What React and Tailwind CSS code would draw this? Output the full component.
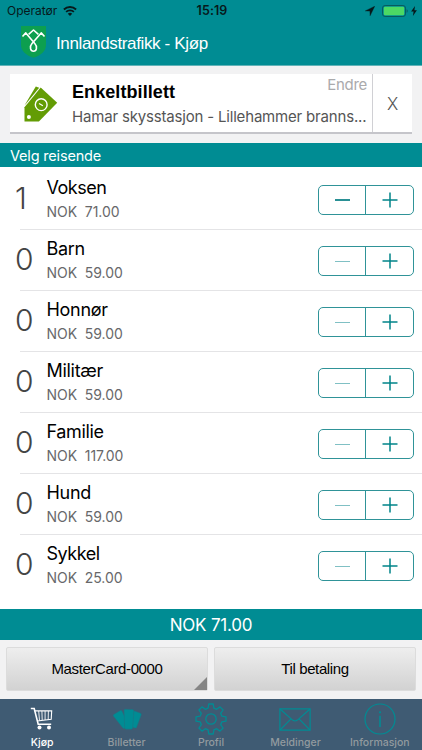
import { useState } from "react";

const initialTravellers = [
  { id: "voksen", name: "Voksen", price: "71.00", count: 1, nameSpacing: "tracking-[-0.500px]" },
  { id: "barn", name: "Barn", price: "59.00", count: 0, nameSpacing: "tracking-[-0.3px]" },
  { id: "honnor", name: "Honnør", price: "59.00", count: 0, nameSpacing: "tracking-[-0.3px]" },
  { id: "militaer", name: "Militær", price: "59.00", count: 0, nameSpacing: "tracking-[-0.3px]" },
  { id: "familie", name: "Familie", price: "117.00", count: 0, nameSpacing: "tracking-[-0.350px]" },
  { id: "hund", name: "Hund", price: "59.00", count: 0, nameSpacing: "tracking-[-0.3px]" },
  { id: "sykkel", name: "Sykkel", price: "25.00", count: 0, nameSpacing: "tracking-[-0.450px]" },
];

const WifiIcon = () => (
  <svg className="w-[14px] h-[10px]" viewBox="0 0 14 10" fill="none" stroke="#07191b">
    <path d="M0.9 3.5a8.8 8.8 0 0 1 12.2 0" strokeWidth="1.9" />
    <path d="M3.1 5.9a5.6 5.6 0 0 1 7.8 0" strokeWidth="1.8" />
    <path d="M7 9.9 4.8 7.7a3.2 3.2 0 0 1 4.4 0z" fill="#07191b" stroke="none" />
  </svg>
);

const LocationIcon = () => (
  <svg className="w-[10px] h-[10px]" viewBox="0 0 10 10" fill="#07191b">
    <path d="M9.7 0.3 0.3 4.9l4.6 0.2 0.2 4.6z" stroke="#07191b" strokeWidth="0.4" strokeLinejoin="round" />
  </svg>
);

const BatteryIcon = () => (
  <svg className="w-[26px] h-[12px]" viewBox="0 0 26 12" fill="none">
    <rect x="0.5" y="0.5" width="23" height="11" rx="2.6" stroke="#075a5f" />
    <rect x="1.8" y="1.8" width="20.4" height="8.4" rx="1.3" fill="#4cd964" />
    <path d="M24.6 4.2v3.6c0.7-0.3 1.1-1 1.1-1.8s-0.4-1.5-1.1-1.8z" fill="#075a5f" />
  </svg>
);

const BoltIcon = () => (
  <svg className="w-[6px] h-[10px]" viewBox="0 0 6 10" fill="#07191b">
    <path d="M4 0 0.1 5.6h2.5L1.9 10 5.9 4.2H3.4z" />
  </svg>
);

const ShieldLogo = () => (
  <svg className="w-[25px] h-[32px]" viewBox="0 0 25 32" fill="none">
    <path d="M0 0h25v18.500C25 24.900 20.600 29.100 12.500 31.700 4.400 29.100 0 24.900 0 18.500z" fill="#0d9f4f" />
    <path
      d="M1.500 10.500 4.800 6.900 13.600 17.300M23.500 10.500 20.200 6.900 11 17.600C8.200 20.800 9.400 25.200 12.500 25.200s4.300-4.400 1.100-7.900M7.600 8.400l4.900-4.400 4.900 4.400"
      stroke="#fff"
      strokeWidth="1.6"
      strokeLinejoin="round"
    />
  </svg>
);

const TicketTagIcon = () => (
  <svg className="w-[34px] h-[36px]" viewBox="0 0 34 36">
    <path d="M11.800 0.600 15.200 1.800 2.600 17 0.600 19.200z" fill="#639c04" />
    <path d="M16.700 1.600 33.200 16.700 14.900 35.600H0.500V21.200z" fill="#639c04" />
    <circle cx="17.200" cy="18.700" r="5.900" fill="none" stroke="#fff" strokeWidth="1.400" />
    <path d="M15 17.400 18.900 19.700" stroke="#fff" strokeWidth="1.200" />
    <circle cx="4.900" cy="31" r="2" fill="#fff" />
  </svg>
);

const CartIcon = () => (
  <svg className="w-[24px] h-[24px]" viewBox="0 0 24 24" fill="none" stroke="#fff">
    <path d="M0.800 1.500h3.400l4 15.800h13" strokeWidth="1.600" />
    <path d="M5 3.900h16.700l-0.500 8.300L7.300 14" strokeWidth="1.100" />
    <path d="M8.700 4 9.500 13.500M11.900 4l0.300 9M15.100 4v9M18.400 4l-0.200 8.700" strokeWidth="0.900" />
    <circle cx="9.500" cy="20.400" r="2" fill="#fff" stroke="none" />
    <circle cx="19" cy="20.400" r="2" fill="#fff" stroke="none" />
  </svg>
);

const CardsIcon = () => (
  <svg className="w-[30px] h-[22px]" viewBox="0 0 30 22" fill="#008c94" stroke="#1f7383" strokeWidth="0.500" strokeLinejoin="round">
    <path d="M1.800 6.400 8.400 2.500q0.900-0.500 1.500 0.400L17 17.500 12.500 20.300q-1 0.500-1.700-0.400L1.300 7.900q-0.500-0.900 0.500-1.500z" />
    <path d="M21.800 2.800 28.600 5.200q1 0.500 0.700 1.500L24.600 19.400q-0.500 0.900-1.500 0.600L17 18.500z" />
    <path d="M13.300 1.300 20.700 1.500q1.300 0.200 1.200 1.400L20.700 20q-0.200 1.200-1.400 1.200L14 21.200q-1.200-0.100-1.300-1.300L12 2.500q0-1.200 1.300-1.200z" />
  </svg>
);

const GearIcon = () => (
  <svg className="w-[32px] h-[32px]" viewBox="0 0 32 32" fill="none" stroke="#008c94" strokeWidth="1.300" strokeLinejoin="round">
    <path d="M13.800 1h4.400l0.700 4.200 2.700 1.100L25 3.900 28.100 7l-2.400 3.400 1.100 2.700 4.200 0.700v4.400l-4.200 0.700-1.100 2.700 2.400 3.400-3.100 3.100-3.400-2.400-2.700 1.100-0.700 4.200h-4.400l-0.700-4.200-2.700-1.100L7 28.100 3.900 25l2.400-3.400-1.100-2.700L1 18.200v-4.400l4.200-0.700 1.100-2.700L3.900 7 7 3.900l3.400 2.400 2.700-1.100z" />
    <circle cx="16" cy="16" r="5.200" />
  </svg>
);

const MailIcon = () => (
  <svg className="w-[32px] h-[23px]" viewBox="0 0 32 23" fill="none" stroke="#008c94" strokeWidth="1.200">
    <path d="M0.900 0.900h30.200v21.200H0.900z" />
    <path d="M1 1l12.600 11.100q2.400 1.800 4.800 0L31 1M1 22l11-11.200M31 22 20 10.800" />
  </svg>
);

const InfoIcon = () => (
  <svg className="w-[32px] h-[32px]" viewBox="0 0 32 32" fill="none" stroke="#008c94" strokeWidth="1.200">
    <circle cx="16" cy="16" r="15" />
    <path d="M16 12.800v11.200" strokeWidth="1.500" />
    <circle cx="16" cy="9.300" r="1.100" fill="#008c94" stroke="none" />
  </svg>
);

const tabs = [
  { label: "Kjøp", icon: <CartIcon /> },
  { label: "Billetter", icon: <CardsIcon /> },
  { label: "Profil", icon: <GearIcon /> },
  { label: "Meldinger", icon: <MailIcon /> },
  { label: "Informasjon", icon: <InfoIcon /> },
];

const StatusBar = () => (
  <div className="h-[22px] flex items-center font-['Inter',sans-serif] text-[#07191b]">
    <div className="flex-1 flex items-center gap-[6px] pl-[7px]">
      <span className="text-[12px]">Operatør</span>
      <WifiIcon />
    </div>
    <span className="text-[12.500px] font-semibold tracking-[0.1px]">15:19</span>
    <div className="flex-1 flex items-center justify-end pr-[5px]">
      <LocationIcon />
      <span className="ml-[7px]">
        <BatteryIcon />
      </span>
      <span className="ml-[3px]">
        <BoltIcon />
      </span>
    </div>
  </div>
);

const Stepper = ({ count, onChange }) => (
  <div className="flex w-[96px] h-[30px] rounded-[5px] border border-[#2f9398]">
    <button
      className="w-[47px] flex items-center justify-center border-r border-[#2f9398]"
      disabled={count === 0}
      onClick={() => onChange(count - 1)}
      aria-label="-"
    >
      <span className={count === 0 ? "w-[15px] h-px bg-[#80c0c4]" : "w-[15px] h-[2px] bg-[#2a9095]"} />
    </button>
    <button
      className="flex-1 flex items-center justify-center"
      onClick={() => onChange(count + 1)}
      aria-label="+"
    >
      <svg className="w-[16px] h-[16px]" viewBox="0 0 16 16" stroke="#008489" strokeWidth="1.500">
        <path d="M0.500 8h15M8 0.500v15" />
      </svg>
    </button>
  </div>
);

const TravellerRow = ({ traveller, last, onChange }) => (
  <li className="h-[61px] pl-[20px]">
    <div className={`h-full flex items-start ${last ? "" : "border-b border-[#e4e4e6]"}`}>
      <span className="w-[26.500px] -ml-[5px] mr-[5px] pt-[10px] text-[30px] leading-[38px] font-light tracking-[-1px] text-[#444]">
        {traveller.count}
      </span>
      <div className="flex-1 pt-[7px]">
        <div className={`text-[18px] leading-[24px] text-black ${traveller.nameSpacing}`}>
          {traveller.name}
        </div>
        <div className="pt-[3px] text-[14px] leading-[18px] text-[#68686a] whitespace-pre tracking-[-0.050px]">
          {"NOK  " + traveller.price}
        </div>
      </div>
      <div className="pt-[16px] pr-[8px]">
        <Stepper count={traveller.count} onChange={onChange} />
      </div>
    </div>
  </li>
);

export default function App() {
  const [travellers, setTravellers] = useState(initialTravellers);
  const [activeTab, setActiveTab] = useState("Kjøp");

  const handleChange = (id, count) => {
    setTravellers(travellers.map((t) => (t.id === id ? { ...t, count } : t)));
  };

  const total = travellers.reduce((sum, t) => sum + t.count * Number(t.price), 0);

  return (
    <div className="w-[422px] h-[750px] flex flex-col overflow-hidden bg-white font-['Inter',sans-serif]">
      <header className="h-[65px] shrink-0 bg-[#008c93]">
        <StatusBar />
        <div className="flex items-start pl-[21px] pt-[4px]">
          <ShieldLogo />
          <h1 className="ml-[10px] pt-[7px] font-['Liberation_Sans',sans-serif] text-[17px] leading-[22px] tracking-[-0.360px] text-white">
            Innlandstrafikk - Kjøp
          </h1>
        </div>
      </header>

      <section className="h-[78px] shrink-0 px-[10px] pt-[8px] border-t border-[#62b3b8] bg-[#f2f2f3]">
        <div className="h-[60px] flex bg-white border-b-2 border-[#c5c5ca]">
          <div className="pl-[14px] pt-[12px]">
            <TicketTagIcon />
          </div>
          <div className="flex-1 min-w-0 pl-[14px] pr-[5px]">
            <div className="flex justify-between">
              <h2 className="pt-[6px] font-['Liberation_Sans',sans-serif] text-[18px] leading-[24px] font-bold tracking-[0.080px] text-black">
                Enkeltbillett
              </h2>
              <button className="self-start pt-[2px] text-[15px] leading-[18px] tracking-[-0.3px] text-[#aaaaac]">
                Endre
              </button>
            </div>
            <p className="pt-[3px] text-[15px] leading-[20px] tracking-[-0.180px] text-[#555] whitespace-nowrap">
              Hamar skysstasjon - Lillehammer branns...
            </p>
          </div>
          <button className="w-[40px] border-l border-[#d0d0d4] pt-[3px] text-[17px] font-light text-[#555]">X</button>
        </div>
      </section>

      <h3 className="h-[24px] shrink-0 pl-[10px] bg-[#008c93] text-[14.500px] leading-[25px] tracking-[-0.180px] text-white">
        Velg reisende
      </h3>

      <ul className="h-[442px] shrink-0 pt-[2px]">
        {travellers.map((t, i) => (
          <TravellerRow
            key={t.id}
            traveller={t}
            last={i === travellers.length - 1}
            onChange={(count) => handleChange(t.id, count)}
          />
        ))}
      </ul>

      <div className="h-[31px] shrink-0 bg-[#008c93] text-center text-[17px] leading-[32px] tracking-[-0.200px] text-white">
        NOK {total.toFixed(2)}
      </div>

      <div className="h-[59px] shrink-0 flex gap-[6px] px-[6px] pt-[7px] bg-[#f2f2f3] font-['Liberation_Sans',sans-serif] text-[15px] tracking-[-0.380px] text-black">
        <button className="relative flex-1 h-[44px] rounded-[2px] border border-[#dcdcdc] bg-linear-to-b from-[#eeeeee] to-[#d2d2d2]">
          MasterCard-0000
          <svg className="absolute right-0 bottom-0 w-[13px] h-[13px]" viewBox="0 0 13 13" fill="#858585">
            <path d="M13 0v13H0z" />
          </svg>
        </button>
        <button className="flex-1 h-[44px] rounded-[2px] border border-[#dcdcdc] bg-linear-to-b from-[#eeeeee] to-[#d2d2d2]">
          Til betaling
        </button>
      </div>

      <nav className="h-[51px] shrink-0 flex bg-[#3f5b73]">
        {tabs.map((tab) => (
          <button
            key={tab.label}
            className={`flex-1 flex flex-col items-center text-[10.500px] leading-[14px] font-medium ${
              activeTab === tab.label ? "text-white" : "text-[#929a9f]"
            }`}
            onClick={() => setActiveTab(tab.label)}
          >
            <span className="h-[37px] pt-[3px] flex items-center">{tab.icon}</span>
            {tab.label}
          </button>
        ))}
      </nav>
    </div>
  );
}
